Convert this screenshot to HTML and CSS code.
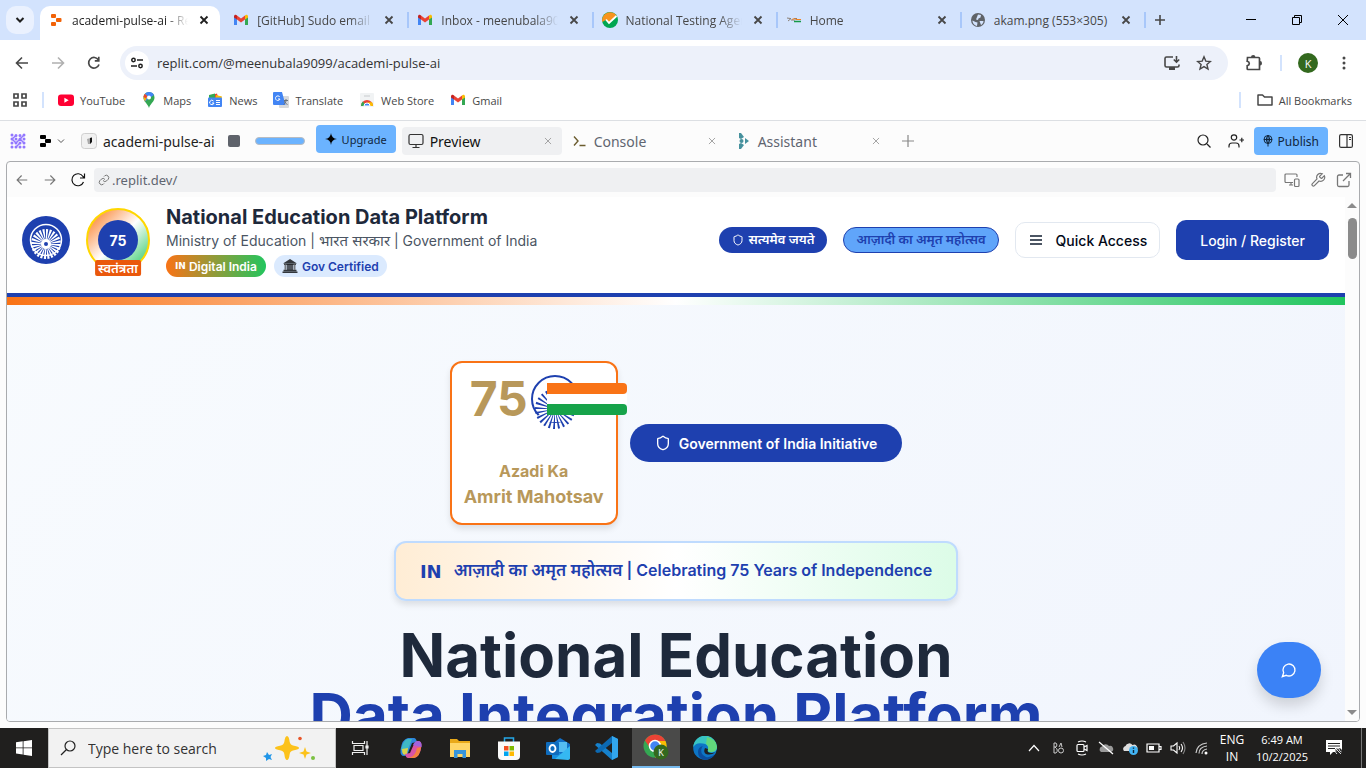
FILE: index.html
```html
<!DOCTYPE html>
<html lang="en">
<head>
<meta charset="utf-8">
<meta name="viewport" content="width=device-width, initial-scale=1">
<title>academi-pulse-ai - Replit</title>
<link rel="stylesheet" href="styles.css">
</head>
<body>
<svg width="0" height="0" class="defs" aria-hidden="true">
  <defs>
    <symbol id="x" viewBox="0 0 16 16"><path d="M4.500 4.500l7 7M11.500 4.500l-7 7" fill="none" stroke="currentColor" stroke-width="1.800"/></symbol>
    <symbol id="thin-x" viewBox="0 0 16 16"><path d="M4.500 4.500l7 7M11.500 4.500l-7 7" fill="none" stroke="currentColor" stroke-width="1"/></symbol>
    <symbol id="gmail" viewBox="0 0 16 16"><path d="M1 4v9h3V7z" fill="#4285f4"/><path d="M15 4v9h-3V7z" fill="#34a853"/><path d="M4 3.600l4 3 4-3V7.600l-4 3-4-3z" fill="#ea4335"/><path d="M1 4.500C1 2.500 3 2.200 4 3.400v4.200L1 5.500z" fill="#c5221f"/><path d="M15 4.500c0-2-2-2.300-3-1.100v4.200l3-2.100z" fill="#fbbc04"/></symbol>
    <symbol id="left" viewBox="0 0 16 16"><path d="M14 8H3M8 2.500L2.500 8 8 13.500" fill="none" stroke="currentColor" stroke-width="1.600"/></symbol>
    <symbol id="right" viewBox="0 0 16 16"><path d="M2 8h11M8 2.500L13.500 8 8 13.500" fill="none" stroke="currentColor" stroke-width="1.600"/></symbol>
    <symbol id="shield" viewBox="0 0 24 24"><path d="M20 13c0 5-3.500 7.500-7.660 8.950a1 1 0 0 1-.67-.01C7.500 20.500 4 18 4 13V6a1 1 0 0 1 1-1c2 0 4.500-1.200 6.240-2.720a1.170 1.170 0 0 1 1.520 0C14.510 3.810 17 5 19 5a1 1 0 0 1 1 1z" fill="none" stroke="currentColor" stroke-width="2"/></symbol>
  </defs>
</svg>

<header class="tabstrip">
  <button class="tab-search" aria-label="Search tabs"><svg width="16" height="16" viewBox="0 0 16 16"><path d="M4.500 6l3.500 3.500L11.500 6" fill="none" stroke="#1f1f1f" stroke-width="2"/></svg></button>
  <nav class="tabs" aria-label="Browser tabs">
    <div class="tab tab-active">
      <svg width="16" height="16" viewBox="0 0 16 16"><g fill="#f26207"><rect x="3" y="2" width="5" height="4" rx="1"/><rect x="8" y="6" width="5.500" height="4" rx="1"/><rect x="3" y="10" width="5" height="4" rx="1"/></g></svg>
      <span class="tab-title">academi-pulse-ai - Replit</span>
      <button class="close" aria-label="Close tab"><svg width="16" height="16"><use href="#x"/></svg></button>
    </div>
    <div class="tab">
      <svg width="16" height="16"><use href="#gmail"/></svg>
      <span class="tab-title">[GitHub] Sudo email verification</span>
      <button class="close" aria-label="Close tab"><svg width="16" height="16"><use href="#x"/></svg></button>
    </div>
    <div class="tab">
      <svg width="16" height="16"><use href="#gmail"/></svg>
      <span class="tab-title">Inbox - meenubala9099@gmail</span>
      <button class="close" aria-label="Close tab"><svg width="16" height="16"><use href="#x"/></svg></button>
    </div>
    <div class="tab">
      <svg width="16" height="16" viewBox="0 0 16 16"><circle cx="8" cy="8" r="8" fill="#00a651"/><path d="M.3 10A8 8 0 0 1 14.500 3.400L7 10.500 4.500 7.500z" fill="#f7941d"/><path d="M4 7.500l3 3.500 7.500-7" fill="none" stroke="#fff" stroke-width="1.800"/></svg>
      <span class="tab-title">National Testing Agency</span>
      <button class="close" aria-label="Close tab"><svg width="16" height="16"><use href="#x"/></svg></button>
    </div>
    <div class="tab">
      <svg width="16" height="16" viewBox="0 0 16 16"><path d="M1 6l4 .6L2 9M5 8h4M8 6.500h3" stroke="#8b8178" fill="none"/><path d="M6 7.500q3-2 4 0h5" stroke="#f58220" fill="none"/><path d="M8 9.500h7" stroke="#159947" stroke-width="1.500"/></svg>
      <span class="tab-title">Home</span>
      <button class="close" aria-label="Close tab"><svg width="16" height="16"><use href="#x"/></svg></button>
    </div>
    <div class="tab">
      <svg width="16" height="16" viewBox="0 0 16 16"><circle cx="8" cy="8" r="7" fill="#5f6368"/><path d="M2.500 8.500l3 1.500 2 .5-.5 3.500C4.500 13.500 2.300 11 2.500 8.500zM8 2.500l3 .5-.5 2.500-2 1-.5 1.500-2-.5 1-2.500zM9.500 9h4c0 2-1.500 3.500-2.500 4z" fill="#d3e3fd"/></svg>
      <span class="tab-title tab-title-full">akam.png (553×305)</span>
      <button class="close" aria-label="Close tab"><svg width="16" height="16"><use href="#x"/></svg></button>
    </div>
  </nav>
  <button class="new-tab" aria-label="New tab"><svg width="16" height="16" viewBox="0 0 16 16"><path d="M8 3v10M3 8h10" stroke="#474747" stroke-width="1.600"/></svg></button>
  <div class="window-controls">
    <button aria-label="Minimize"><svg width="12" height="12" viewBox="0 0 12 12"><path d="M1 5.500h10" stroke="#000"/></svg></button>
    <button aria-label="Restore"><svg width="12" height="12" viewBox="0 0 12 12"><path d="M1.500 3.500h7v7h-7zM3.500 3.500v-2h7v7h-2" fill="none" stroke="#000"/></svg></button>
    <button aria-label="Close"><svg width="12" height="12" viewBox="0 0 12 12"><path d="M1 1l10 10M11 1L1 11" stroke="#000"/></svg></button>
  </div>
</header>

<div class="toolbar-wrap">
  <div class="toolbar">
    <button class="tool" aria-label="Back"><svg width="16" height="16"><use href="#left"/></svg></button>
    <button class="tool tool-off" aria-label="Forward"><svg width="16" height="16"><use href="#right"/></svg></button>
    <button class="tool" aria-label="Reload"><svg width="16" height="16" viewBox="0 0 16 16"><path d="M13 9.500A5.300 5.300 0 1 1 12.500 5" fill="none" stroke="currentColor" stroke-width="1.700"/><path d="M13.600 1.800v5H8.800V5.100H12V1.800z" fill="currentColor"/></svg></button>
    <div class="omnibox">
      <button class="site-info" aria-label="Site information"><svg width="16" height="16" viewBox="0 0 16 16" fill="none" stroke="#1f1f1f" stroke-width="1.500"><circle cx="4.500" cy="5" r="1.700"/><path d="M8 5h6M2 11h6"/><circle cx="11.500" cy="11" r="1.700"/></svg></button>
      <input class="address" type="text" aria-label="Address" value="replit.com/@meenubala9099/academi-pulse-ai">
      <button class="tool" aria-label="Install app"><svg width="18" height="16" viewBox="0 0 18 16"><path d="M10 2H3.500A1.500 1.500 0 0 0 2 3.500v7A1.500 1.500 0 0 0 3.500 12h11a1.500 1.500 0 0 0 1.500-1.500V9.500" fill="none" stroke="currentColor" stroke-width="1.600"/><path d="M6 12h6v3H6z" fill="currentColor"/><path d="M13.500 1v6M10.800 4.500l2.700 2.700 2.700-2.700" fill="none" stroke="currentColor" stroke-width="1.600"/></svg></button>
      <button class="tool" aria-label="Bookmark"><svg width="16" height="16" viewBox="0 0 16 16"><path d="M8 1.800l1.800 4.300 4.600.4-3.500 3 1.100 4.600L8 11.600l-4 2.500 1.100-4.600-3.500-3 4.600-.4z" fill="none" stroke="currentColor" stroke-width="1.400"/></svg></button>
    </div>
    <button class="tool" aria-label="Extensions"><svg width="18" height="18" viewBox="0 0 18 18"><path d="M2.500 3.500h11a1 1 0 0 1 1 1v11H3a.8.800 0 0 1-.8-.8v-3c2.800-.8 2.800-3.700 0-4.400z" fill="none" stroke="currentColor" stroke-width="1.700"/><path d="M6 3a2.200 2 0 0 1 4.400 0zM15 7a2 2.200 0 0 1 0 4.400z" fill="currentColor"/></svg></button>
    <span class="divider tool-divider"></span>
    <button class="avatar" aria-label="Profile">K</button>
    <button class="tool" aria-label="Menu"><svg width="16" height="16" viewBox="0 0 16 16" fill="currentColor"><circle cx="8" cy="3" r="1.500"/><circle cx="8" cy="8" r="1.500"/><circle cx="8" cy="13" r="1.500"/></svg></button>
  </div>
  <nav class="bookmarks" aria-label="Bookmarks">
    <button class="apps" aria-label="Apps"><svg width="16" height="16" viewBox="0 0 16 16" fill="none" stroke="#474747" stroke-width="1.700"><path d="M2 2h4v4H2zM10 2h4v4h-4zM2 10h4v4H2zM10 10h4v4h-4z"/></svg></button>
    <span class="divider bookmark-divider"></span>
    <a href="#"><svg width="16" height="16" viewBox="0 0 16 16"><rect y="2.500" width="16" height="11.500" rx="3" fill="#ff0033"/><path d="M6.400 5.700v5L10.700 8.200z" fill="#fff"/></svg>YouTube</a>
    <a href="#"><svg width="16" height="16" viewBox="0 0 16 16"><path d="M8 0a5.500 5.500 0 0 1 5.500 5.500C13.500 10 9.500 11 8 16 6.500 11 2.500 10 2.500 5.500A5.500 5.500 0 0 1 8 0z" fill="#34a853"/><path d="M8 0a5.500 5.500 0 0 1 5 3L4 9.500C2 7 2.500 4 3.500 2.200A5.500 5.500 0 0 1 8 0z" fill="#4285f4"/><path d="M3.800 2L6.500 4.200 4 9.500Q2.300 7.500 2.500 5z" fill="#fbbc04"/><path d="M3.800 2l2.700 2.200L4.500 6.500 2.500 4.800Q2.800 3 3.800 2z" fill="#ea4335"/><circle cx="8" cy="5.500" r="2" fill="#fff"/></svg>Maps</a>
    <a href="#"><svg width="16" height="16" viewBox="0 0 16 16"><path d="M2 4l8-2.500L12 8H3z" fill="#ea4335"/><path d="M2 3l6-1.500V8H2z" fill="#34a853"/><path d="M9 3l6 1.500-1 5H8z" fill="#fbbc04"/><rect x="1" y="5.500" width="14" height="9.500" rx="1" fill="#4285f4"/><path d="M6.500 9A2.200 2.200 0 1 0 7 11H5M9 8.500h4M9 10.500h4M9 12.500h4" fill="none" stroke="#fff"/></svg>News</a>
    <a href="#"><svg width="16" height="16" viewBox="0 0 16 16"><rect x="6" y="4" width="10" height="12" rx="1" fill="#d7d9dc"/><path d="M1 0h8l3.500 13H1a1 1 0 0 1-1-1V1a1 1 0 0 1 1-1z" fill="#4285f4"/><path d="M6.800 5A2.300 2.300 0 1 0 7 7H5" fill="none" stroke="#fff"/><path d="M11 8.500h4M13 7v1.500c0 2-1.500 3.500-2.500 4M11.500 9c.5 2 2 3 3 3.500" fill="none" stroke="#6b737c"/></svg>Translate</a>
    <a href="#"><svg width="16" height="16" viewBox="0 0 16 16"><rect x="1" y="1" width="14" height="14" rx="1" fill="#f1f3f4"/><path d="M5 4h6" stroke="#c7cacd"/><path d="M2 14a6 6 0 0 1 12 0z" fill="#ea4335"/><path d="M2 14q0-3.500 2-4.500L7 14z" fill="#34a853"/><path d="M10 14l-1-3.800h4.200q.8 1.500.8 3.800z" fill="#fbbc04"/><path d="M5 14a3 3 0 0 1 6 0z" fill="#4285f4" stroke="#fff"/></svg>Web Store</a>
    <a href="#"><svg width="16" height="16"><use href="#gmail"/></svg>Gmail</a>
    <span class="divider push"></span>
    <a href="#"><svg width="16" height="16" viewBox="0 0 16 16"><path d="M1 3h4.500L7.500 5H15v8H1z" fill="none" stroke="#474747" stroke-width="1.500" stroke-linejoin="round"/></svg>All Bookmarks</a>
  </nav>
</div>

<main class="workspace">
  <div class="ws-bar">
    <svg class="dots" width="16" height="16" viewBox="0 0 16 16" fill="none" stroke="#9277ff" stroke-linecap="round"><path d="M2 2h.01M6 2.500h.01M10 2.500h.01M14 2h.01M2 6h.01M6 6h.01M10 6h.01M14 6h.01M2 10h.01M6 10h.01M10 10h.01M14 10h.01M2 14h.01M6 14h.01M10 14h.01M14 14h.01" stroke-width="3"/><path d="M2 6l4 4 4-4 4 4M6 14l4-4M6 2.500L2 6M10 6l4-4" stroke-width="1.500"/></svg>
    <button class="ws-menu" aria-label="Workspace menu"><svg width="12" height="14" viewBox="0 0 12 14"><rect x="1" y="1" width="6" height="4" rx="1"/><rect x="6" y="5" width="6" height="4" rx="1"/><rect x="1" y="9" width="6" height="4" rx="1"/></svg><svg width="8" height="8" viewBox="0 0 8 8"><path d="M1 2.500l3 3 3-3" fill="none" stroke="#555"/></svg></button>
    <button class="project"><svg width="16" height="16" viewBox="0 0 16 16"><rect x=".5" y=".5" width="15" height="15" rx="3" fill="#f1f1f1" stroke="#cfcfcf"/><path d="M6 6l5-1.500v3.500L9 11H7z" fill="#aaa"/><path d="M9 5l2-.5V9l-2 2z" fill="#111"/></svg>academi-pulse-ai</button>
    <button class="stop" aria-label="Stop"></button>
    <span class="usage"></span>
    <button class="blue-btn upgrade"><svg width="12" height="12" viewBox="0 0 12 12"><path d="M6 0q.5 5.500 6 6-5.500.5-6 6-.5-5.500-6-6 5.500-.5 6-6z"/></svg>Upgrade</button>
    <div class="ws-tabs">
      <div class="ws-tab ws-active"><svg width="16" height="16" viewBox="0 0 16 16" fill="none" stroke="#333" stroke-width="1.200"><rect x="1" y="1.500" width="14" height="10" rx="1.500"/><path d="M8 11.500v3M4.500 14.500h7"/></svg><span>Preview</span><button class="close" aria-label="Close Preview"><svg width="14" height="14"><use href="#thin-x"/></svg></button></div>
      <div class="ws-tab"><svg width="16" height="16" viewBox="0 0 16 16" fill="none" stroke="#6b5c2e" stroke-width="1.400"><path d="M2 3.500L6 8l-4 4.500M7.500 12.500h6"/></svg><span>Console</span><button class="close" aria-label="Close Console"><svg width="14" height="14"><use href="#thin-x"/></svg></button></div>
      <div class="ws-tab"><svg width="16" height="16" viewBox="0 0 16 16" fill="#46919d"><path d="M3 0h2l3 4-3 2-2-1zM3 16h2l3-4-3-2-2 1zM9 5l4 3-4 3z"/><circle cx="5.500" cy="8" r="2"/></svg><span>Assistant</span><button class="close" aria-label="Close Assistant"><svg width="14" height="14"><use href="#thin-x"/></svg></button></div>
    </div>
    <button class="icon-btn plus" aria-label="New pane"><svg width="12" height="12" viewBox="0 0 12 12"><path d="M6 0v12M0 6h12" stroke="#888" stroke-width="1.200"/></svg></button>
    <div class="ws-actions">
      <button class="icon-btn" aria-label="Search"><svg width="14" height="14" viewBox="0 0 14 14" fill="none" stroke="#222" stroke-width="1.200"><circle cx="6" cy="6" r="5"/><path d="M10 10l3.500 3.500"/></svg></button>
      <button class="icon-btn" aria-label="Invite"><svg width="16" height="14" viewBox="0 0 16 14" fill="none" stroke="#222" stroke-width="1.200"><circle cx="6" cy="3.500" r="2.700"/><path d="M1 13.500V12q0-3 3-3h4q3 0 3 3v1.500M11.500 6h4.500M13.800 3.800v4.500"/></svg></button>
      <button class="blue-btn"><svg width="10" height="12" viewBox="0 0 10 12" fill="none" stroke="#10263d"><circle cx="5" cy="4.500" r="4"/><path d="M1 4.500h8M5 .5v11M5 .5Q1.500 4.500 5 8.500 8.500 4.500 5 .5"/></svg>Publish</button>
      <button class="icon-btn" aria-label="Toggle sidebar"><svg width="14" height="14" viewBox="0 0 14 14" fill="none" stroke="#333" stroke-width="1.200"><rect x=".6" y=".6" width="12.800" height="12.800" rx="1.500"/><path d="M8 1v12M10 3.500h2M10 5.500h2"/></svg></button>
    </div>
  </div>

  <section class="preview" aria-label="Preview">
    <div class="preview-bar">
      <button class="icon-btn faded" aria-label="Back"><svg width="12" height="12" viewBox="0 0 16 16"><path d="M15 8H2M7.500 2L1.500 8l6 6" fill="none" stroke="currentColor" stroke-width="1.500"/></svg></button>
      <button class="icon-btn faded" aria-label="Forward"><svg width="12" height="12" viewBox="0 0 16 16"><path d="M1 8h13M8.500 2l6 6-6 6" fill="none" stroke="currentColor" stroke-width="1.500"/></svg></button>
      <button class="icon-btn" aria-label="Reload"><svg width="16" height="16" viewBox="0 0 16 16"><path d="M13.500 10A6 6 0 1 1 13 4.500l1.500 1.500M14.500 1.500V6H10" fill="none" stroke="#111" stroke-width="1.200"/></svg></button>
      <div class="preview-url"><svg width="12" height="12" viewBox="0 0 24 24" fill="none" stroke="#777" stroke-width="2"><path d="M10 13a5 5 0 0 0 7.500.5l3-3a5 5 0 0 0-7-7L12 5M14 11a5 5 0 0 0-7.500-.5l-3 3a5 5 0 0 0 7 7L12 19"/></svg><input type="text" aria-label="Preview address" value=".replit.dev/"></div>
      <div class="preview-tools">
        <button class="icon-btn faded" aria-label="Devices"><svg width="16" height="16" viewBox="0 0 16 16" fill="none" stroke="currentColor" stroke-width="1.200"><path d="M9 10.500H2a1 1 0 0 1-1-1V3a1 1 0 0 1 1-1h10a1 1 0 0 1 1 1v2M5 13h4M7 10.500V13"/><rect x="10.500" y="7" width="4.500" height="7.500" rx="1"/></svg></button>
        <button class="icon-btn faded" aria-label="Developer tools"><svg width="16" height="16" viewBox="0 0 24 24" fill="none" stroke="currentColor" stroke-width="1.800"><path d="M14.700 6.300a1 1 0 0 0 0 1.400l1.600 1.600a1 1 0 0 0 1.400 0l3.770-3.770a6 6 0 0 1-7.940 7.940l-6.910 6.910a2.120 2.120 0 0 1-3-3l6.910-6.910a6 6 0 0 1 7.940-7.940z"/></svg></button>
        <button class="icon-btn faded" aria-label="Open in new tab"><svg width="16" height="16" viewBox="0 0 16 16" fill="none" stroke="currentColor" stroke-width="1.300"><path d="M7 3H3a1.500 1.500 0 0 0-1.500 1.500v8.500A1.500 1.500 0 0 0 3 14.500h8.500A1.500 1.500 0 0 0 13 13V9M7 9l7-7M10 1.500h4.500V6"/></svg></button>
      </div>
    </div>

    <div class="viewport">
      <div class="page">
        <header class="site-header">
          <svg class="emblem" width="48" height="48" viewBox="0 0 48 48"><circle cx="24" cy="24" r="24" fill="#1e40af"/><circle cx="24" cy="24" r="15.500" fill="none" stroke="#fff" stroke-width="1.500"/><circle cx="24" cy="28" r="9" fill="none" stroke="#fff" stroke-width="12" pathLength="48" stroke-dasharray="1.200 .8"/><circle cx="24" cy="28" r="5" fill="#fff"/><circle cx="24" cy="28" r="2" fill="#1e40af"/></svg>
          <div class="jubilee"><span class="jubilee-core">75</span><span class="ribbon" lang="hi">स्वतंत्रता</span></div>
          <div class="brand">
            <h2>National Education Data Platform</h2>
            <p>Ministry of Education | <span class="hi-text" lang="hi">भारत सरकार</span> | Government of India</p>
            <div class="badges">
              <span class="badge badge-india"><b class="in">IN</b> Digital India</span>
              <span class="badge badge-gov"><svg width="16" height="14" viewBox="0 0 16 14"><path d="M8 0l7 4.500H1z" fill="#34383d"/><path d="M1.500 11.500h13M.5 13.300h15M2 5.300h12" stroke="#34383d" stroke-width="1.400"/><path d="M3.500 5.500V11M12.500 5.500V11" stroke="#777b80" stroke-width="2"/><path d="M6 5.500V11M8 5.500V11M10 5.500V11" stroke="#17191c" stroke-width="1.400"/></svg>Gov Certified</span>
            </div>
          </div>
          <div class="site-actions">
            <span class="pill pill-dark" lang="hi"><svg width="12" height="12"><use href="#shield"/></svg>सत्यमेव जयते</span>
            <span class="pill pill-light" lang="hi">आज़ादी का अमृत महोत्सव</span>
            <button class="quick"><svg width="12" height="10" viewBox="0 0 12 10"><path d="M0 1h12M0 5h12M0 9h12" stroke="#4b5563" stroke-width="1.800"/></svg>Quick Access</button>
            <button class="login">Login / Register</button>
          </div>
        </header>
        <div class="tricolor"></div>
        <section class="hero">
          <div class="hero-row">
            <div class="azadi">
              <div class="azadi-top">
                <span class="azadi-num">75</span>
                <svg class="azadi-flag" width="98" height="56" viewBox="0 0 98 56"><circle cx="26" cy="25" r="23" fill="#fff" stroke="#1e40af" stroke-width="2"/><path d="M7 43L26 30l22 14v4H7z" fill="#fff"/><circle cx="26" cy="35" r="13" fill="none" stroke="#1e40af" stroke-width="14" pathLength="48" stroke-dasharray=".8 1.200"/><path d="M18 9h76a4 4 0 0 1 4 4v3a4 4 0 0 1-4 4H18z" fill="#f97316"/><path d="M18 20h80v10H18z" fill="#fff"/><path d="M18 30h76a4 4 0 0 1 4 4v3a4 4 0 0 1-4 4H18z" fill="#16a34a"/></svg>
              </div>
              <p class="azadi-a">Azadi Ka</p>
              <p class="azadi-b">Amrit Mahotsav</p>
            </div>
            <span class="initiative"><svg width="16" height="16"><use href="#shield"/></svg>Government of India Initiative</span>
          </div>
          <div class="banner"><b class="in">IN</b><span><span class="hi-text" lang="hi">आज़ादी का अमृत महोत्सव</span> | Celebrating 75 Years of Independence</span></div>
          <h1>National Education<br><span>Data Integration Platform</span></h1>
        </section>
        <button class="chat" aria-label="Open chat"><svg width="16" height="16" viewBox="0 0 24 24" fill="none" stroke="#fff" stroke-width="2"><path d="M7.900 20A9 9 0 1 0 4 16.100L2 22z"/></svg></button>
      </div>
      <div class="scrollbar"><span class="arrow-up"></span><span class="thumb"></span><span class="arrow-down"></span></div>
    </div>
  </section>
</main>

<footer class="taskbar">
  <button class="task start" aria-label="Start"><svg width="16" height="16" viewBox="0 0 16 16" fill="#fff"><path d="M0 2.300l6.700-1v6.200H0zM7.500 1.200L16 0v7.500H7.500zM0 8.300h6.700v6.200L0 13.600zM7.500 8.300H16V16l-8.500-1.200z"/></svg></button>
  <label class="search"><svg width="16" height="16" viewBox="0 0 16 16" fill="none" stroke="#222" stroke-width="1.200"><circle cx="10" cy="6" r="5"/><path d="M6.500 9.500L1 15"/></svg><input type="text" aria-label="Search" placeholder="Type here to search">
    <svg width="64" height="26" viewBox="0 0 64 26"><path d="M24 1q2 0 2.700 6 .5 3 4.300 3.700 5 .8 5 2.300t-5 2.300q-3.800.700-4.300 3.700-.7 6-2.700 6t-2.700-6q-.5-3-4.300-3.700-5-.8-5-2.300t5-2.300q3.800-.7 4.300-3.700Q22 1 24 1z" fill="#fcc21b"/><path d="M42 12l1.500 4.500L48 18l-4.500 1.500L42 24l-1.500-4.500L36 18l4.500-1.500z" fill="#fcc21b"/><path d="M4 17l2 3 3-1-1.500 3L9 25l-3-1-3 2v-3l-3-2 3-1z" fill="#2196e8"/><circle cx="37" cy="3.500" r="1.800" fill="#e8562a"/><circle cx="50" cy="23" r="2" fill="#7cc142"/></svg>
  </label>
  <div class="apps-row">
    <button class="task task-view" aria-label="Task view"><svg width="18" height="16" viewBox="0 0 18 16" fill="none" stroke="#eee" stroke-width="1.200"><path d="M3 5.500h9v5H3zM1.500 1v2.500h12V1M1.500 15v-2.500h12V15M16 1v14"/><path d="M15 6h2v2h-2z" fill="#eee"/></svg></button>
    <button class="task" aria-label="Copilot"><svg width="24" height="24" viewBox="0 0 24 24"><path d="M9 2h6q2 0 3 4l-5 1-4 10q-1 3-4 3-4 0-3.500-6Q3 3 9 2z" fill="#2d86dc"/><path d="M8 3Q4 5 2 14l6 2L13 3z" fill="#3fb8c5"/><path d="M3 13l6-1-1 6q-5 3-5-5z" fill="#d9d34b"/><path d="M15 22H9q-2 0-3-4l5-1 4-9q1-3 4-3 4 0 3.500 5Q21 21 15 22z" fill="#d854a7"/><path d="M12 21q4-1 6-9l4-1q-1 10-7 11H9z" fill="#f4813e"/><path d="M14 9q2-4 5-4 4 0 3.500 6L17 10z" fill="#a163dc"/></svg></button>
    <button class="task" aria-label="File Explorer"><svg width="24" height="24" viewBox="0 0 24 24"><path d="M2 3h7l2 2h11v16H2z" fill="#e9a919"/><path d="M2 7h20v14H2z" fill="#ffd667"/><path d="M6 14h12v8h-3.500v-4h-5v4H6z" fill="#3795db"/></svg></button>
    <button class="task" aria-label="Store"><svg width="24" height="24" viewBox="0 0 24 24"><path d="M7.500 6V2h9v4" fill="none" stroke="#25a8e8" stroke-width="1.500"/><path d="M1 5.500h22V20q0 4-4 4H5q-4 0-4-4z" fill="#fafafa"/><path d="M7 10h4.500v4.500H7z" fill="#f25022"/><path d="M12.500 10H17v4.500h-4.500z" fill="#7fba00"/><path d="M7 15.500h4.500V20H7z" fill="#00a4ef"/><path d="M12.500 15.500H17V20h-4.500z" fill="#ffb900"/></svg></button>
    <button class="task" aria-label="Outlook"><svg width="26" height="24" viewBox="0 0 26 24"><path d="M7 8l8-6 10 6v15H7z" fill="#1270c8"/><path d="M10 6h12v10H10z" fill="#55bdf1"/><path d="M7 13l18 10H9q-2 0-2-2z" fill="#178fdf"/><path d="M25 10v12q0 2-2 2l-13-1z" fill="#35b8f1"/><rect x="1" y="6" width="13" height="13" rx="1" fill="#0f6cbd"/><ellipse cx="7.500" cy="12.500" rx="3" ry="3.500" fill="none" stroke="#fff" stroke-width="1.800"/></svg></button>
    <button class="task" aria-label="Visual Studio Code"><svg width="24" height="24" viewBox="0 0 24 24"><path d="M17 0l6 3v18l-6 3L0 9l2-2 3 .5 12 9.500z" fill="#1681cc"/><path d="M17 0L0 15l2 2 3-.5L17 7z" fill="#0c69b2"/><path d="M17 0l6 3v18l-6 3z" fill="#32a6ed"/></svg></button>
    <button class="task task-active" aria-label="Chrome"><svg width="26" height="26" viewBox="0 0 26 26"><circle cx="12" cy="12" r="11.500" fill="#34a853"/><path d="M2 6.500A11.500 11.500 0 0 1 22.500 7H12l-5 7z" fill="#ea4335"/><path d="M22.500 7A11.500 11.500 0 0 1 12 23.500l5-9L14 7z" fill="#fbbc04"/><circle cx="12" cy="12" r="5.500" fill="#4285f4" stroke="#fff" stroke-width="1.500"/><circle cx="18" cy="18" r="7.500" fill="#33691e"/><text x="18" y="21.500" text-anchor="middle" font-size="9" fill="#fff">K</text></svg></button>
    <button class="task" aria-label="Edge"><svg width="24" height="24" viewBox="0 0 24 24"><circle cx="12" cy="12" r="11.800" fill="#0d75c5"/><path d="M.3 11A11.800 11.800 0 0 1 24 12q-.5 4-5 4.500-5 0-4-3 1-5-5-6Q3 6 .3 11z" fill="#38c4c3"/><path d="M14 1q9 2 10 10-.5 4-5 5-5 0-4-3 1-3-2-5z" fill="#62d77c"/><path d="M9 11q-3 7 4 10 5 1 9-3-4 6-10 5.800Q5 23 5 16q0-5 5-6z" fill="#0b4d9d"/><path d="M15 13q-2 4 4 4l3-.5q-4 3-9 1.500-3-2-1-6z" fill="#202020"/></svg></button>
  </div>
  <div class="tray">
    <button class="tray-btn" aria-label="Show hidden icons"><svg width="14" height="14" viewBox="0 0 14 14"><path d="M2 10l5-5.500L12 10" fill="none" stroke="#fff" stroke-width="1.200"/></svg></button>
    <button class="tray-btn" aria-label="Input"><svg width="14" height="14" viewBox="0 0 14 14" fill="none" stroke="#ccc"><path d="M3 2v10M3 2h2q2 2 0 4H3M4 6q4 3 1 6H3M8 6l2-4 1 4"/><circle cx="10" cy="9.500" r="2.500"/></svg></button>
    <button class="tray-btn" aria-label="Meet now"><svg width="16" height="16" viewBox="0 0 16 16" fill="none" stroke="#fff" stroke-width="1.200"><rect x="3" y="4.500" width="7" height="7" rx="1"/><path d="M10 7l3-1.500v5L10 9M4 2q4-2 8 0M4 14q4 2 8 0"/></svg></button>
    <button class="tray-btn" aria-label="OneDrive"><svg width="16" height="14" viewBox="0 0 16 14"><path d="M3 11a3 3 0 0 1 1-5.500 4 4 0 0 1 7-.5 3 3 0 0 1 2 6z" fill="#999"/><path d="M1 1l14 12" stroke="#fff" stroke-width="1.200"/></svg></button>
    <button class="tray-btn" aria-label="Cloud status"><svg width="16" height="14" viewBox="0 0 16 14"><path d="M2 10a3 3 0 0 1 1.500-5 4 4 0 0 1 7-1 3 3 0 0 1 3 6z" fill="#ddd"/><circle cx="11.500" cy="9.500" r="4.500" fill="#42b4f4"/><path d="M11.500 9v3M11.500 6.500v1.300" stroke="#123" stroke-width="1.400"/></svg></button>
    <button class="tray-btn" aria-label="Battery"><svg width="16" height="12" viewBox="0 0 16 12" fill="none" stroke="#fff" stroke-width="1.200"><path d="M1 2h12v8H1zM13 4.500h2v3h-2"/><path d="M3 4h5v4H3z" fill="#fff" stroke="none"/></svg></button>
    <button class="tray-btn" aria-label="Volume"><svg width="16" height="14" viewBox="0 0 16 14" fill="none" stroke="#fff" stroke-width="1.100"><path d="M1 5h2.500L7 2v10L3.500 9H1zM9 5q1.500 2 0 4M11 3q3 4 0 8"/><path d="M13 1q4 6 0 12" stroke="#888"/></svg></button>
    <button class="tray-btn" aria-label="Network"><svg width="14" height="14" viewBox="0 0 14 14" fill="none" stroke="#ccc" stroke-width="1.200"><path d="M1 12Q2 3 12 2M4 12.500Q4 6 12 5M7 13q0-4 5-5"/><circle cx="11" cy="12" r="1.500" fill="#fff" stroke="none"/></svg></button>
    <button class="lang">ENG<br>IN</button>
    <button class="clock">6:49 AM<br>10/2/2025</button>
    <button class="notice" aria-label="Notifications"><svg width="18" height="16" viewBox="0 0 18 16"><path d="M1 0h16v12H8l-3 3v-3H1z" fill="#fff"/><path d="M3 3.500h12M3 6h12M3 8.500h7" stroke="#222"/><circle cx="13.500" cy="11.500" r="3.500" fill="#222"/><path d="M12 14a3 3 0 0 1 2-5.500 3.500 3.500 0 0 0 2.500 3.500M11 9l5 5" fill="none" stroke="#ddd"/></svg></button>
  </div>
</footer>
</body>
</html>
```
FILE: styles.css
```css
* { box-sizing: border-box; margin: 0; }
body {
  display: flex;
  flex-direction: column;
  height: 100vh;
  overflow: hidden;
  background: #fcfcfc;
  color: #1f1f1f;
  font-family: "Open Sans", "Noto Sans", sans-serif;
  font-size: 12px;
}
button, input {
  padding: 0;
  border: 0;
  background: none;
  color: inherit;
  font: inherit;
}
input { min-width: 0; outline: 0; }
button { display: flex; align-items: center; justify-content: center; flex-shrink: 0; }
a { color: inherit; text-decoration: none; }
svg { flex-shrink: 0; }
.defs { position: absolute; }

/* Browser tabs */
.tabstrip { display: flex; align-items: center; flex: 0 0 40px; padding-left: 6px; background: #d3e3fd; }
.tab-search { width: 28px; height: 28px; margin-right: 6px; border-radius: 10px; background: #eaf1fe; }
.tabs { display: flex; flex: 0 1 1106px; min-width: 0; align-self: flex-end; }
.tab {
  display: flex;
  flex: 1 1 0;
  align-items: center;
  gap: 8px;
  min-width: 0;
  height: 34px;
  padding: 0 12px 6px 8px;
  color: #474747;
  background: linear-gradient(#a8c7fa, #a8c7fa) 100% 6px / 2px 16px no-repeat;
}
.tab-active { margin-right: 5px; padding-right: 8px; border-radius: 10px 10px 0 0; background: #fff; color: #1f1f1f; }
.tab-title {
  flex: 1;
  overflow: hidden;
  white-space: nowrap;
  -webkit-mask-image: linear-gradient(90deg, #000 80%, transparent);
  mask-image: linear-gradient(90deg, #000 80%, transparent);
}
.tab-title-full { -webkit-mask-image: none; mask-image: none; }
.close { width: 16px; height: 16px; }
.new-tab { width: 28px; height: 28px; }
.window-controls { display: flex; margin-left: auto; }
.window-controls button { width: 46px; height: 40px; }

/* Address bar and bookmarks */
.toolbar-wrap { flex: 0 0 81px; background: #fff; border-bottom: 1px solid #dcdfe3; }
.toolbar { display: flex; align-items: center; height: 46px; padding: 0 8px; gap: 8px; }
.tool { width: 28px; height: 28px; color: #474747; }
.tool-off { color: #b0b0b0; }
.omnibox { display: flex; flex: 1; align-items: center; gap: 4px; height: 34px; margin: 0 4px; padding: 0 10px 0 5px; border-radius: 17px; background: #edf1fa; }
.site-info { width: 24px; height: 24px; border-radius: 50%; background: #fff; }
.address { flex: 1; padding-left: 4px; font-size: 13px; color: #333; }
.divider { width: 2px; height: 16px; background: #d3e3fd; }
.tool-divider { margin: 0 8px 0 4px; }
.avatar { width: 20px; height: 20px; margin-right: 4px; border-radius: 50%; background: #33691e; color: #fff; font-size: 11px; }
.bookmarks { display: flex; align-items: center; gap: 16px; height: 28px; padding: 0 14px 0 12px; color: #474747; font-size: 11px; }
.bookmarks a { display: flex; align-items: center; gap: 6px; }
.bookmark-divider { margin: 0 -2px; }
.push { margin-left: auto; }

/* Workspace */
.workspace { display: flex; flex: 1; flex-direction: column; min-height: 0; padding: 0 6px 6px; }
.ws-bar { display: flex; flex: 0 0 40px; align-items: center; font-family: "Noto Sans", sans-serif; font-size: 14px; padding-left: 4px; }
.ws-menu { gap: 6px; margin-left: 13px; }
.project { gap: 6px; margin-left: 16px; }
.stop { width: 12px; height: 12px; margin-left: 13px; border-radius: 2px; background: #5f636b; }
.usage { width: 50px; height: 8px; margin: 0 11px 0 15px; border: 1px solid #b8bcc2; border-radius: 4px; background: #6bb3ff; }
.blue-btn { gap: 5px; height: 28px; padding: 0 9px; border-radius: 4px; background: #6bb3ff; color: #10263d; font-size: 12px; }
.upgrade { align-self: flex-start; margin-top: 4px; font-size: 11px; }
.ws-tabs { display: flex; gap: 4px; margin-left: 6px; }
.ws-tab { display: flex; align-items: center; gap: 6px; width: 160px; height: 28px; padding: 0 6px; border-radius: 4px; color: #5f6570; }
.ws-tab span { flex: 1; }
.ws-tab .close { color: #999; }
.ws-active { background: #eff0f2; color: #111; }
.icon-btn { width: 16px; height: 24px; }
.plus { margin-left: 10px; }
.ws-actions { display: flex; align-items: center; gap: 16px; margin-left: auto; padding-right: 6px; }
.ws-actions .blue-btn { margin: 0 -6px; }

/* Preview pane */
.preview { display: flex; flex: 1; flex-direction: column; min-height: 0; overflow: hidden; border: 1px solid #a9abae; border-radius: 4px; background: #fcfcfc; }
.preview-bar { display: flex; flex: 0 0 35px; align-items: center; gap: 12px; padding: 0 7px; }
.faded { color: #777; }
.preview-url { display: flex; flex: 1; align-items: center; gap: 2px; height: 24px; margin-left: -4px; padding-left: 4px; border-radius: 4px; background: #eff0f2; color: #5f6570; font-family: "Noto Sans", sans-serif; font-size: 13px; }
.preview-url input { flex: 1; }
.preview-tools { display: flex; gap: 10px; margin-left: -4px; }
.viewport { display: flex; flex: 1; min-height: 0; }
.scrollbar { display: flex; flex-direction: column; align-items: center; width: 14px; padding: 6px 0; background: #fcfcfc; }
.arrow-up, .arrow-down { border: 5px solid transparent; border-top: 0; border-bottom: 5px solid #8b8b8b; }
.arrow-down { margin-top: auto; border-top: 5px solid #8b8b8b; border-bottom: 0; }
.thumb { width: 9px; height: 41px; margin-top: 10px; border-radius: 5px; background: #8b8b8b; }

/* Previewed site */
.page { position: relative; flex: 1; min-width: 0; overflow: hidden; background: linear-gradient(135deg, #f8fbfe, #f1f5fd); font-family: Inter, "Noto Sans Devanagari", "Noto Sans", sans-serif; }
.site-header { display: flex; align-items: center; gap: 16px; height: 100px; padding: 0 16px 10px 15px; border-bottom: 4px solid #1e40af; background: #fff; }
.jubilee { position: relative; display: flex; align-items: center; justify-content: center; width: 64px; height: 64px; border: 2px solid #ffd700; border-radius: 50%; background: linear-gradient(135deg, #f97316, #fff 50%, #22c55e); }
.jubilee-core { display: flex; align-items: center; justify-content: center; width: 40px; height: 40px; border-radius: 50%; background: #1e40af; color: #fff; font-size: 14px; font-weight: 700; }
.ribbon { position: absolute; top: 50px; left: 50%; transform: translateX(-50%); padding: 0 3px; border-radius: 2px; background: #ea580c; color: #fff; font-size: 13px; font-weight: 600; line-height: 16px; white-space: nowrap; }
.brand { padding-top: 2px; }
.brand h2 { color: #1e293b; font-size: 20px; line-height: 24px; }
.brand p { color: #4b5563; font-size: 14px; line-height: 24px; white-space: nowrap; }
.brand .hi-text { font-size: 15px; line-height: 20px; }
.badges { display: flex; gap: 8px; margin-top: 2px; }
.badge { display: flex; align-items: center; gap: 4px; height: 22px; padding: 0 8px; border-radius: 11px; font-size: 12px; font-weight: 600; }
.badge-india { gap: 3px; padding: 0 9px; background: linear-gradient(90deg, #f97316, #22c55e); color: #fff; }
.in { font-family: "DejaVu Sans", sans-serif; font-size: 9px; }
.badge-gov { background: #dbeafe; color: #1e40af; }
.site-actions { display: flex; align-items: center; gap: 16px; margin-left: auto; white-space: nowrap; }
.pill { display: flex; align-items: center; gap: 4px; height: 26px; padding: 0 13px; border-radius: 13px; font-size: 13px; font-weight: 600; }
.pill-dark { background: #1e40af; color: #fff; }
.pill-light { border: 1px solid #1e40af; background: #60a5fa; color: #1e40af; padding: 0 12px; }
.quick { gap: 14px; height: 36px; padding: 0 12px 0 14px; border: 1px solid #e2e8f0; border-radius: 10px; color: #020817; font-size: 14px; font-weight: 500; }
.login { height: 40px; padding: 0 24px; border-radius: 10px; background: #1e40af; color: #fff; font-size: 14px; font-weight: 500; }
.tricolor { height: 8px; background: linear-gradient(90deg, #f97316, #fff, #22c55e); }
.hero { display: flex; flex-direction: column; align-items: center; padding: 56px 24px 0; }
.hero-row { display: flex; align-items: center; gap: 12px; }
.azadi { padding: 11px 12px 12px; border: 2px solid #f97316; border-radius: 12px; background: #fff; box-shadow: 0 4px 6px #0000001a; color: #b8985a; font-weight: 700; text-align: center; }
.azadi-top { display: flex; height: 85px; margin-right: -24px; padding-left: 6px; }
.azadi-num { font-size: 48px; line-height: 50px; }
.azadi-flag { margin-left: 1px; }
.azadi-a { font-size: 16px; line-height: 24px; }
.azadi-b { font-size: 18px; line-height: 28px; }
.initiative { display: flex; align-items: center; gap: 8px; height: 38px; padding: 0 25px; border-radius: 19px; background: #1e40af; color: #fff; font-size: 14px; font-weight: 600; }
.banner { display: flex; align-items: center; gap: 12px; height: 60px; margin-top: 16px; padding: 0 24px; border: 2px solid #bfdbfe; border-radius: 12px; background: linear-gradient(90deg, #ffedd5, #fff 50%, #dcfce7); box-shadow: 0 4px 6px #0000001a; color: #1e40af; font-size: 16px; font-weight: 600; white-space: nowrap; }
.banner .in { font-size: 18px; }
.banner .hi-text { font-size: 17px; }
.hero h1 { margin-top: 24px; color: #1e293b; font-size: 60px; line-height: 60px; text-align: center; white-space: nowrap; }
.hero h1 span { color: #1e40af; }
.chat { position: absolute; right: 24px; bottom: 23px; width: 64px; height: 56px; border-radius: 28px; background: #3b82f6; box-shadow: 0 8px 14px #00000026; }

/* Taskbar */
.taskbar { display: flex; flex: 0 0 40px; background: #201f1e; color: #fff; }
.task { width: 48px; height: 40px; }
.task-view { margin-right: 2px; }
.task-active { border-bottom: 2px solid #76b9ed; background: #4a4a49; }
.search { display: flex; align-items: center; gap: 12px; width: 288px; padding: 0 8px 0 11px; border: 1px solid #c3c3c3; background: #f2f2f2; color: #222; font-size: 14px; }
.search input { flex: 1; }
.search input::placeholder { color: #333; opacity: 1; }
.apps-row { display: flex; gap: 1px; }
.tray { display: flex; align-items: center; margin-left: auto; padding-right: 4px; }
.tray-btn { width: 24px; height: 40px; }
.lang, .clock { display: block; line-height: 17px; text-align: center; }
.lang { width: 36px; }
.clock { width: 64px; font-size: 11px; }
.notice { width: 48px; height: 40px; padding-right: 8px; border-right: 1px solid #777; }
```
